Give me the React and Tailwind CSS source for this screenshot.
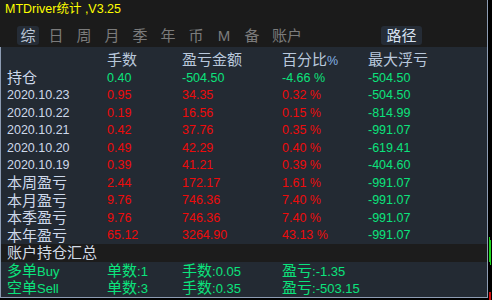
import React from 'react';

const RED = 'text-[#ee0b0b]';
const GREEN = 'text-[#0be37c]';

// split text so that Chinese runs get the larger size
function T({ s }) {
  const parts = s.split(/([\u3400-\u9fff]+)/);
  return (
    <>
      {parts.map((p, i) =>
        i % 2 === 1 ? (
          <span key={i} className="text-[15px]">{p}</span>
        ) : (
          <span key={i}>{p}</span>
        )
      )}
    </>
  );
}

const filas = [
  { label: '持仓', lots: '0.40', pl: '-504.50', pct: '-4.66 %', dd: '-504.50', win: false },
  { label: '2020.10.23', lots: '0.95', pl: '34.35', pct: '0.32 %', dd: '-504.50', win: true },
  { label: '2020.10.22', lots: '0.19', pl: '16.56', pct: '0.15 %', dd: '-814.99', win: true },
  { label: '2020.10.21', lots: '0.42', pl: '37.76', pct: '0.35 %', dd: '-991.07', win: true },
  { label: '2020.10.20', lots: '0.49', pl: '42.29', pct: '0.40 %', dd: '-619.41', win: true },
  { label: '2020.10.19', lots: '0.39', pl: '41.21', pct: '0.39 %', dd: '-404.60', win: true },
  { label: '本周盈亏', lots: '2.44', pl: '172.17', pct: '1.61 %', dd: '-991.07', win: true },
  { label: '本月盈亏', lots: '9.76', pl: '746.36', pct: '7.40 %', dd: '-991.07', win: true },
  { label: '本季盈亏', lots: '9.76', pl: '746.36', pct: '7.40 %', dd: '-991.07', win: true },
  { label: '本年盈亏', lots: '65.12', pl: '3264.90', pct: '43.13 %', dd: '-991.07', win: true },
];

const tabs = ['综', '日', '周', '月', '季', '年', '币', 'M', '备'];

const grid = 'grid grid-cols-[100px_75px_100px_86px_1fr] items-center';

export default function App() {
  return (
    <div className="w-[492px] h-[300px] bg-black flex overflow-hidden font-['Liberation_Sans','Noto_Sans_CJK_SC',sans-serif] text-[12.5px] leading-none">
      <div className="w-[488px] h-[298px] shrink-0 border-r border-b border-[#8d9cb3] flex flex-col">
        {/* cabecera */}
        <div className="h-[47px] bg-[#1b1b1b] flex flex-col">
          <div className="h-[18px] pl-[5px] flex items-center text-[#ffff00]">
            MTDriver<span className="text-[12.5px]">统计</span>&nbsp;,V3.25
          </div>
          <div className="mt-[8px] pl-[17px] flex items-center gap-[6px]">
            {tabs.map((t, i) => (
              <div
                key={t}
                className={`w-[22px] h-[19px] rounded-[3px] flex items-center justify-center text-[15px] ${
                  i === 0 ? 'bg-[#252c36] text-[#bcc7d6]' : 'text-[#7b7b7b]'
                }`}
              >
                {t}
              </div>
            ))}
            <div className="h-[19px] px-[3px] flex items-center text-[15px] text-[#7b7b7b]">账户</div>
            <div className="ml-[70px] w-[41px] h-[19px] rounded-[3px] bg-[#252c36] flex items-center justify-center text-[15px] text-[#d6e1f0]">
              路径
            </div>
          </div>
        </div>

        {/* tabla */}
        <div className="flex-1 bg-[#232a33] border-l border-[#8d9cb3] pt-[3px]">
          <div className={`${grid} h-[19px] pl-[6px] text-[#b9c8dc]`}>
            <span></span>
            <span className="text-[15px]">手数</span>
            <span className="text-[15px]">盈亏金额</span>
            <span>
              <span className="text-[15px]">百分比</span>
              <span className="text-[#86b2e6]">%</span>
            </span>
            <span className="text-[15px]">最大浮亏</span>
          </div>

          {filas.map((f) => {
            const c = f.win ? RED : GREEN;
            return (
              <div key={f.label} className={`${grid} h-[17.5px] pl-[6px]`}>
                <span className="text-[#cdd8ea]"><T s={f.label} /></span>
                <span className={f.win ? RED : GREEN}>{f.lots}</span>
                <span className={c}>{f.pl}</span>
                <span className={c}>{f.pct}</span>
                <span className={GREEN}>{f.dd}</span>
              </div>
            );
          })}

          <div className="h-[17.5px] bg-[#1c1c1c] pl-[6px] flex items-center text-[15px] text-[#d3dbe6]">
            账户持仓汇总
          </div>

          {[
            ['多单Buy', '单数:1', '手数:0.05', '盈亏:-1.35'],
            ['空单Sell', '单数:3', '手数:0.35', '盈亏:-503.15'],
          ].map((r) => (
            <div key={r[0]} className={`${grid} h-[17.5px] pl-[6px] text-[13px] ${GREEN}`}>
              {r.map((x) => (
                <span key={x}><T s={x} /></span>
              ))}
              <span></span>
            </div>
          ))}
        </div>
      </div>

      {/* trozo del gráfico detrás */}
      <div className="relative flex-1">
        <div className="absolute left-[1px] top-[237px] w-[1px] h-[25px] bg-[#1fd41f]" />
        <div className="absolute left-[2px] top-[240px] w-[1px] h-[25px] bg-[#1fd41f]" />
        <div className="absolute left-[1px] top-[292px] w-[2px] h-[8px] bg-[#d01010]" />
      </div>
    </div>
  );
}
